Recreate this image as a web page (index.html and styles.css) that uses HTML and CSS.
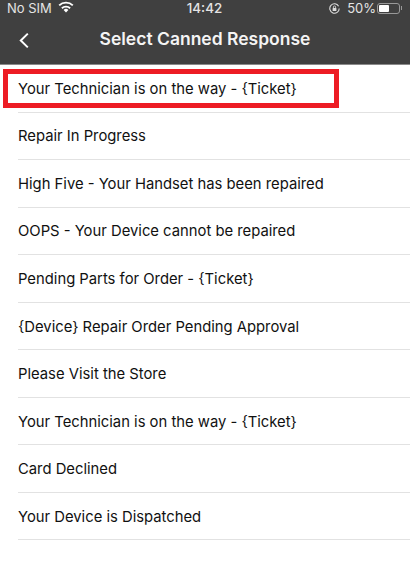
FILE: index.html
```html
<!DOCTYPE html>
<html lang="en">
<head>
<meta charset="utf-8">
<title>Select Canned Response</title>
<link rel="stylesheet" href="styles.css">
</head>
<body>
<div class="screen">
  <header class="top">
    <div class="status">
      <div class="status-left">
        <span>No SIM</span>
        <svg class="wifi" width="16" height="12" viewBox="0 0 16 12"><path d="M8 11.6 5.6 8.9a3.4 3.4 0 0 1 4.8 0Z" fill="#fff"/><path d="M3.9 7.2a6 6 0 0 1 8.2 0" fill="none" stroke="#fff" stroke-width="1.9"/><path d="M1.2 4.4a9.8 9.8 0 0 1 13.6 0" fill="none" stroke="#fff" stroke-width="1.9"/></svg>
      </div>
      <span class="time">14:42</span>
      <div class="status-right">
        <svg class="lock" width="11" height="11" viewBox="0 0 11 11"><path d="M9.6 3.2A4.7 4.7 0 1 0 10.2 5.5" fill="none" stroke="#ddd" stroke-width="1.1"/><rect x="3.6" y="4.9" width="3.8" height="3" rx=".5" fill="#ddd"/><path d="M4.4 5V4a1.1 1.1 0 0 1 2.2 0v1" fill="none" stroke="#ddd" stroke-width=".8"/></svg>
        <span>50%</span>
        <div class="battery"><div class="battery-level"></div></div>
        <div class="battery-cap"></div>
      </div>
    </div>
    <div class="nav">
      <svg class="back" width="12" height="17" viewBox="0 0 12 17"><path d="M9.8 1.6 2.8 8.5l7 6.9" fill="none" stroke="#fff" stroke-width="2"/></svg>
      <h1 class="title">Select Canned Response</h1>
    </div>
  </header>
  <ul class="list">
    <li class="row">Your Technician is on the way - {Ticket}</li>
    <li class="row">Repair In Progress</li>
    <li class="row">High Five - Your Handset has been repaired</li>
    <li class="row">OOPS - Your Device cannot be repaired</li>
    <li class="row">Pending Parts for Order - {Ticket}</li>
    <li class="row">{Device} Repair Order Pending Approval</li>
    <li class="row">Please Visit the Store</li>
    <li class="row">Your Technician is on the way - {Ticket}</li>
    <li class="row">Card Declined</li>
    <li class="row">Your Device is Dispatched</li>
  </ul>
  <div class="highlight"></div>
</div>
</body>
</html>
```
FILE: styles.css
```css
* { box-sizing: border-box; }
html, body { margin: 0; padding: 0; background: #fff; }
.screen {
  position: relative;
  width: 410px;
  height: 574px;
  overflow: hidden;
  font-family: Inter, "Liberation Sans", sans-serif;
}
.top {
  height: 65px;
  background: #404040;
  border-bottom: 1px solid #8a8a8a;
  color: #fff;
}
.status {
  height: 12px;
  padding: 0 8px 0 7px;
  display: grid;
  grid-template-columns: 1fr auto 1fr;
  align-items: center;
  font-size: 13px;
  color: #e4e4e4;
}
.status-left { display: flex; align-items: center; gap: 6px; }
.wifi { margin-top: -2px; }
.time { font-size: 13.4px; font-weight: 500; }
.status-right { display: flex; align-items: center; justify-content: flex-end; gap: 0; }
.lock { margin-right: 7px; }
.status-right span { margin-right: 1px; }
.battery {
  width: 23px;
  height: 11px;
  border: 1px solid #999;
  border-radius: 3px;
  padding: 1px;
}
.battery-level { width: 10px; height: 7px; background: #fff; border-radius: 1px; }
.battery-cap { width: 1px; height: 4px; margin-left: 1px; background: #999; }
.nav {
  height: 52px;
  padding: 0 17px;
  display: flex;
  align-items: center;
  position: relative;
  justify-content: center;
}
.back { position: absolute; left: 18px; top: 20px; }
.title {
  margin: 0;
  font-size: 17.5px;
  font-weight: 600;
  color: #f4f4f4;
}
.list { list-style: none; margin: 0; padding: 0 0 0 18px; }
.row {
  height: 47.55px;
  padding-top: 1px;
  display: flex;
  align-items: center;
  border-bottom: 1px solid #e2e2e2;
  font-size: 14.8px;
  color: #111;
}
.highlight {
  position: absolute;
  left: 3px;
  top: 69px;
  width: 336px;
  height: 39px;
  border: 5px solid #ed1c24;
}
```
